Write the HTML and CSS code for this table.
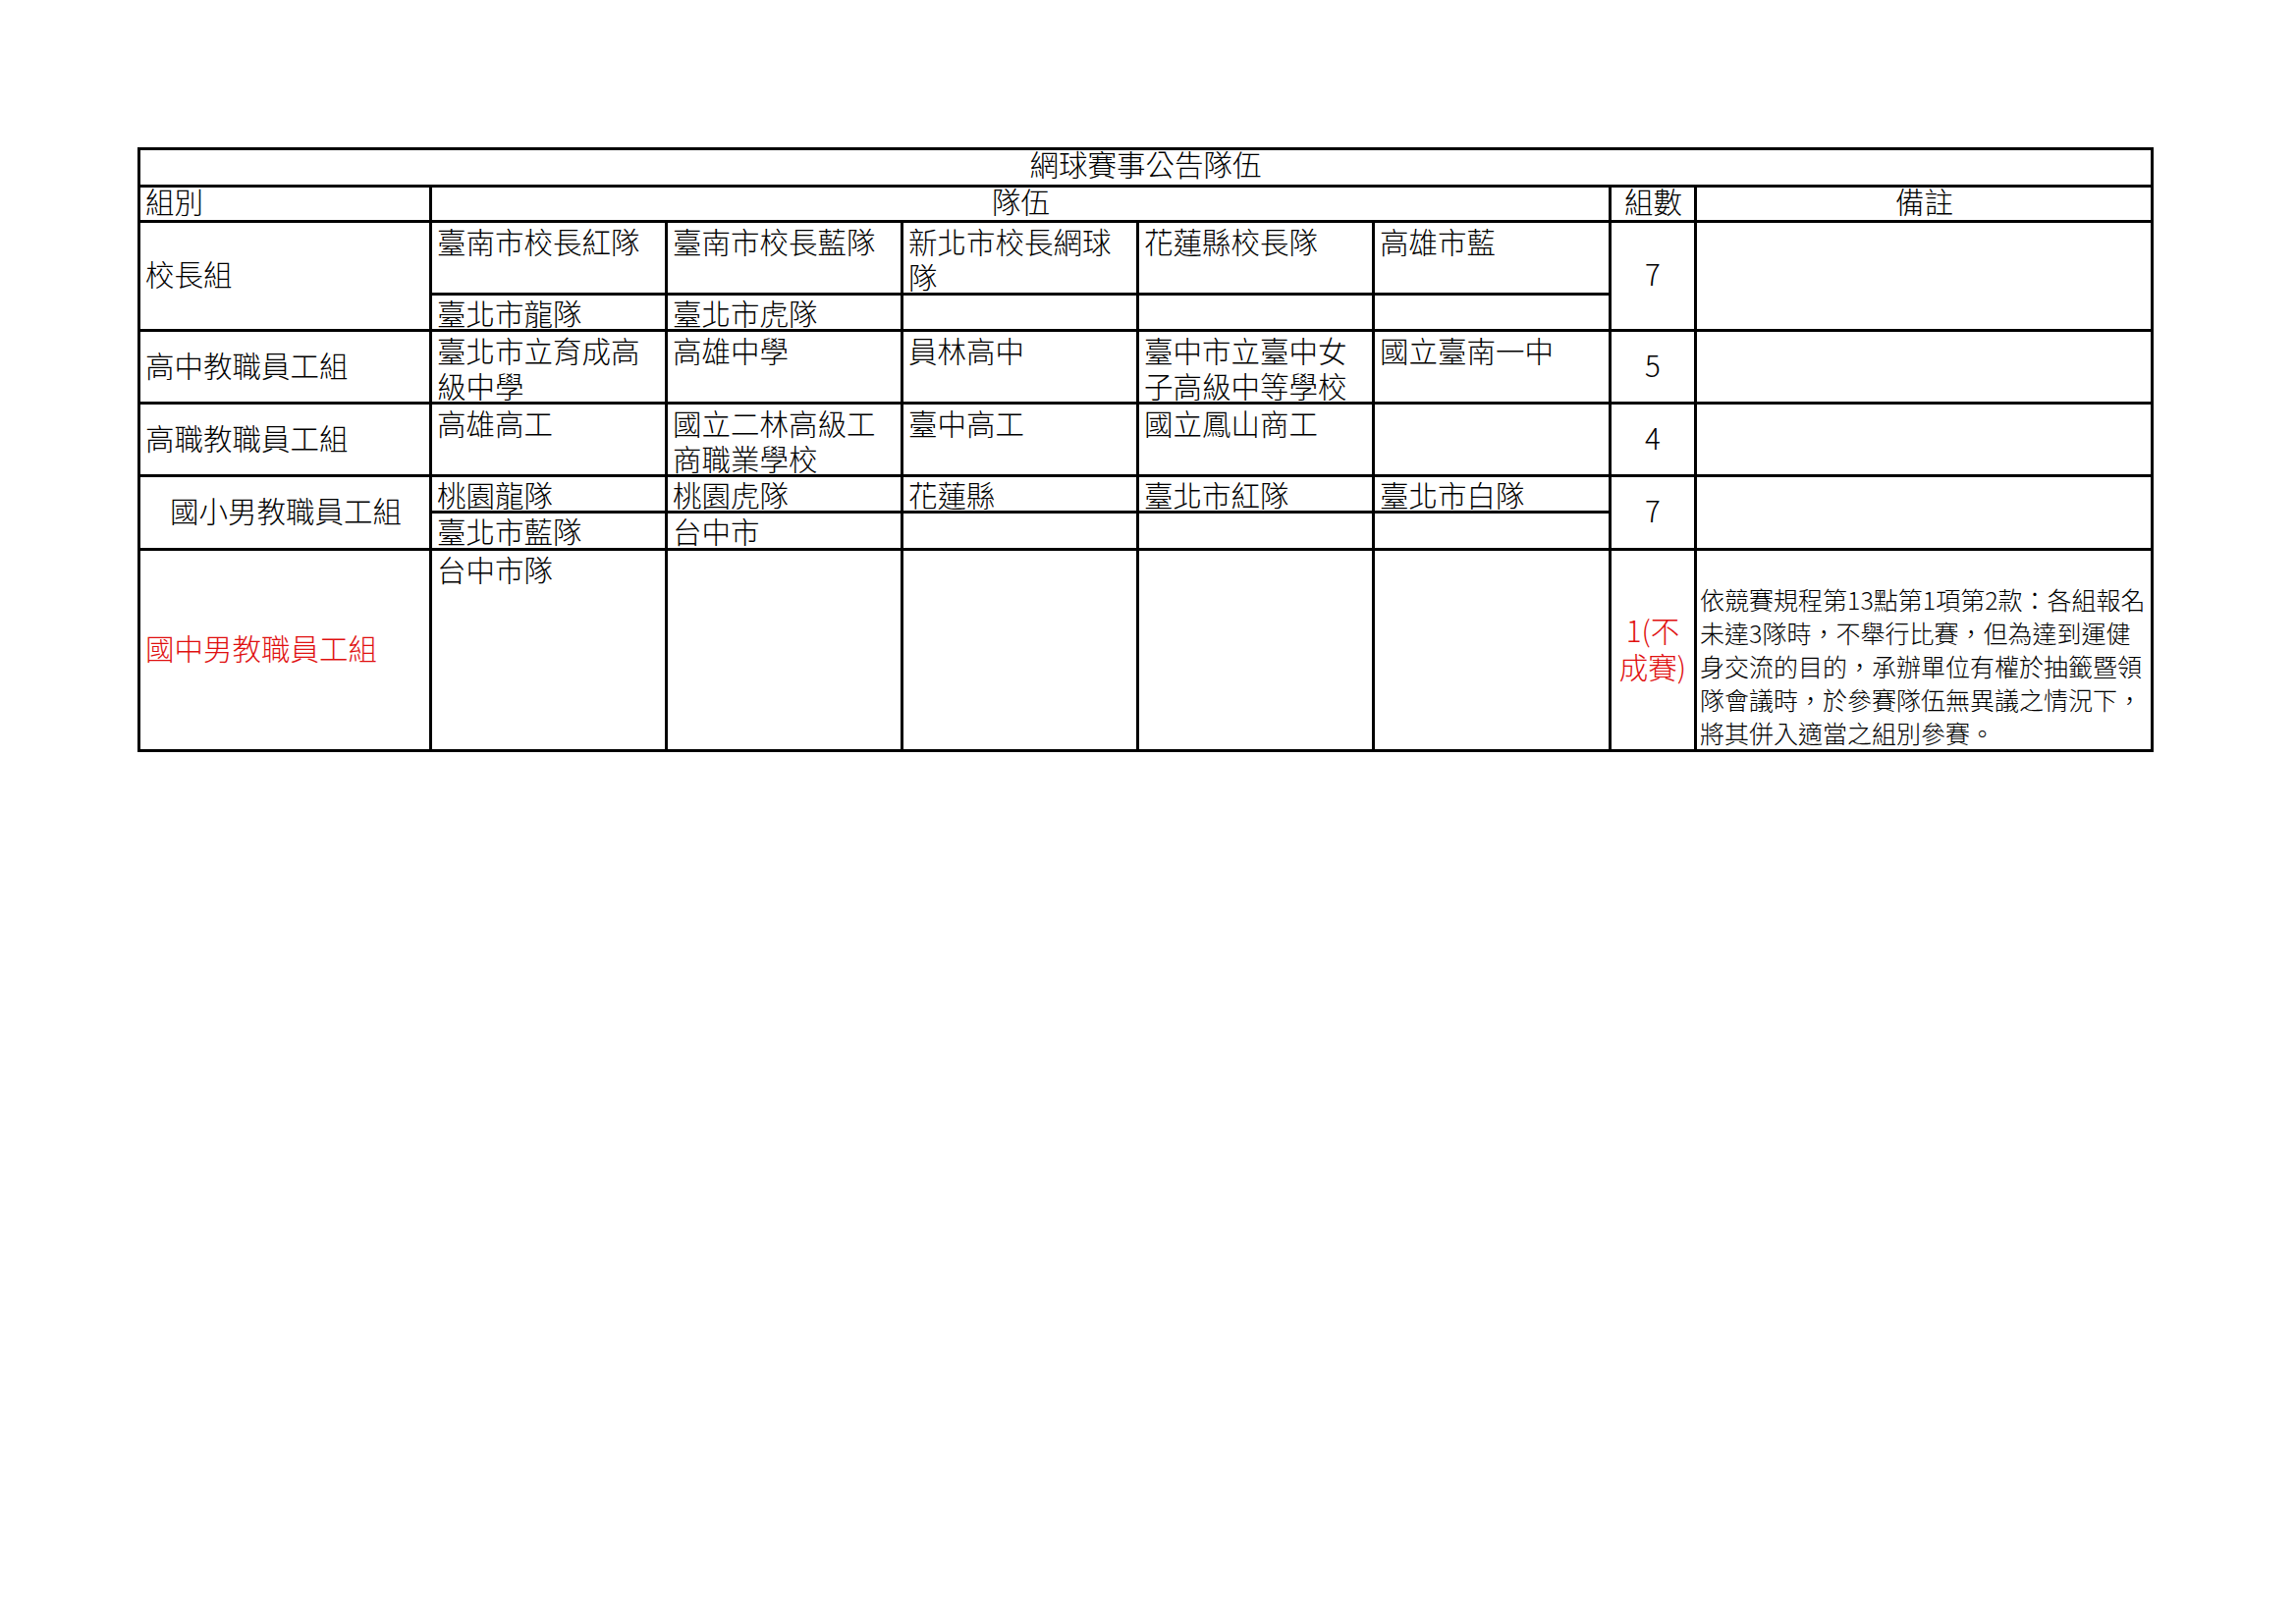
FILE: index.html
```html
<!DOCTYPE html>
<html lang="zh-TW">
<head>
<meta charset="utf-8">
<title>網球賽事公告隊伍</title>
<link rel="stylesheet" href="styles.css">
</head>
<body>
<div class="sheet">
  <div class="grid">
    <div class="cell title">網球賽事公告隊伍</div>

    <div class="cell head">組別</div>
    <div class="cell head center span-teams">隊伍</div>
    <div class="cell head center">組數</div>
    <div class="cell head center">備註</div>

    <div class="cell group span-2r">校長組</div>
    <div class="cell team">臺南市校長紅隊</div>
    <div class="cell team">臺南市校長藍隊</div>
    <div class="cell team">新北市校長網球隊</div>
    <div class="cell team">花蓮縣校長隊</div>
    <div class="cell team">高雄市藍</div>
    <div class="cell count span-2r">7</div>
    <div class="cell note span-2r"></div>
    <div class="cell team short">臺北市龍隊</div>
    <div class="cell team short">臺北市虎隊</div>
    <div class="cell team short"></div>
    <div class="cell team short"></div>
    <div class="cell team short"></div>

    <div class="cell group">高中教職員工組</div>
    <div class="cell team">臺北市立育成高級中學</div>
    <div class="cell team">高雄中學</div>
    <div class="cell team">員林高中</div>
    <div class="cell team">臺中市立臺中女子高級中等學校</div>
    <div class="cell team">國立臺南一中</div>
    <div class="cell count">5</div>
    <div class="cell note"></div>

    <div class="cell group">高職教職員工組</div>
    <div class="cell team">高雄高工</div>
    <div class="cell team">國立二林高級工商職業學校</div>
    <div class="cell team">臺中高工</div>
    <div class="cell team">國立鳳山商工</div>
    <div class="cell team"></div>
    <div class="cell count">4</div>
    <div class="cell note"></div>

    <div class="cell group indent span-2r">國小男教職員工組</div>
    <div class="cell team short">桃園龍隊</div>
    <div class="cell team short">桃園虎隊</div>
    <div class="cell team short">花蓮縣</div>
    <div class="cell team short">臺北市紅隊</div>
    <div class="cell team short">臺北市白隊</div>
    <div class="cell count span-2r">7</div>
    <div class="cell note span-2r"></div>
    <div class="cell team short">臺北市藍隊</div>
    <div class="cell team short">台中市</div>
    <div class="cell team short"></div>
    <div class="cell team short"></div>
    <div class="cell team short"></div>

    <div class="cell group red">國中男教職員工組</div>
    <div class="cell team">台中市隊</div>
    <div class="cell team"></div>
    <div class="cell team"></div>
    <div class="cell team"></div>
    <div class="cell team"></div>
    <div class="cell count red">1(不<br>成賽)</div>
    <div class="cell note remark">依競賽規程第13點第1項第2款：各組報名<br>未達3隊時，不舉行比賽，但為達到運健<br>身交流的目的，承辦單位有權於抽籤暨領<br>隊會議時，於參賽隊伍無異議之情況下，<br>將其併入適當之組別參賽。</div>
  </div>
</div>
</body>
</html>
```

FILE: styles.css
```css
html, body {
  margin: 0;
  padding: 0;
  background: #ffffff;
}

body {
  font-family: "Noto Sans CJK TC", "Noto Sans CJK JP", sans-serif;
  font-weight: 300;
  color: #000000;
}

.sheet {
  padding: 150px 0 0 140px;
}

.grid {
  display: grid;
  width: max-content;
  grid-template-columns: 294px 237px 237px 237px 237px 238px 84px 462px;
  grid-template-rows: 35px 33px 71px 34px 71px 71px 34px 35px 202px;
  gap: 3px;
  padding: 3px;
  background: #000000;
}

.cell {
  background: #ffffff;
  font-size: 29.5px;
  line-height: 37px;
  padding: 0 4px;
  min-width: 0;
  min-height: 0;
}

.title {
  grid-column: 1 / -1;
  text-align: center;
  line-height: 26px;
}

.head {
  line-height: 26px;
  padding-left: 5px;
}

.center {
  text-align: center;
}

.span-teams {
  grid-column: span 5;
}

.span-2r {
  grid-row: span 2;
}

.group {
  display: flex;
  align-items: center;
  padding-left: 5px;
  padding-bottom: 5px;
}

.group.indent {
  padding-left: 30px;
}

.team {
  padding-left: 5px;
  line-height: 36px;
}

.team.short {
  line-height: 31px;
  padding-top: 2px;
}

.count {
  display: flex;
  align-items: center;
  justify-content: center;
  text-align: center;
  padding: 0 0 5px 0;
}

.note {
  padding: 0 3px;
}

.remark {
  display: flex;
  align-items: flex-end;
  font-size: 25px;
  line-height: 34px;
}

.red {
  color: #e01010;
}
```
